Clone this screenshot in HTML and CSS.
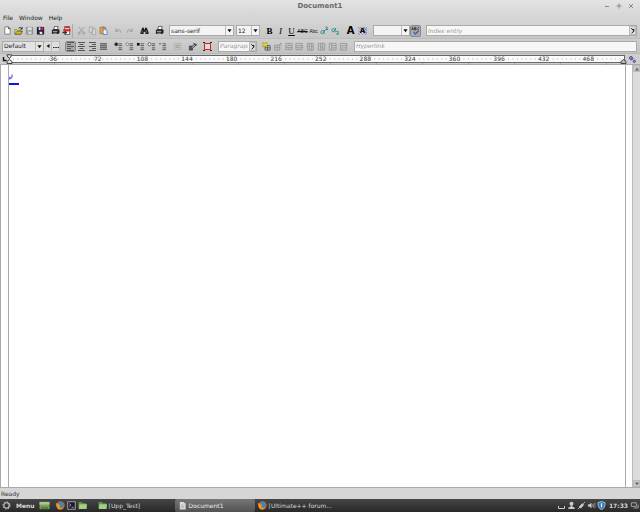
FILE: index.html
```html
<!DOCTYPE html>
<html lang="en">
<head>
<meta charset="utf-8">
<title>Document1</title>
<link rel="stylesheet" href="styles.css">
</head>
<body>
<svg class="defs" aria-hidden="true">
  <symbol id="arrow" viewBox="0 0 6 6"><path d="M0.5 1.5h5L3 5z" fill="#111"/></symbol>
  <symbol id="print" viewBox="0 0 10 10"><path d="M3 4l1-3.5h4L7 4z" fill="#fff" stroke="#222" stroke-width=".7"/><path d="M1 4.5L2.5 3.5h6l1 1v3L8 9H1z" fill="#222"/><path d="M2 6h5M2.5 8h4" stroke="#ddd" stroke-width=".8"/></symbol>
  <symbol id="folder" viewBox="0 0 10 10"><path d="M.5 1h4l1 1.5h3.5v6H.5z" fill="#5e9440"/><path d="M1.5 3.5H10l-.5 5.5H1z" fill="#a5cf88"/></symbol>
  <symbol id="firefox" viewBox="0 0 10 10"><circle cx="5" cy="5" r="4.6" fill="#d9641c"/><path d="M3 1.2C5.500 0 9 2 8.500 5.500 8 8 5.500 8 4.500 7 5.500 6 2.500 5.500 2.500 4z" fill="#3c84c0"/><path d="M.5 2l2 1.500 2 1-1 2c1 1.500 3.500 1.500 4.500.5C7 9 4 10 2 8.500.3 7 0 4 .5 2z" fill="#f09a24"/></symbol>
  <symbol id="index" viewBox="0 0 6 8"><path d="M1.500 1.500l3 2.500M4.500 2v3L2 7" stroke="#111" stroke-width="1.200" fill="none"/></symbol>
</svg>
<div class="window">
  <header class="titlebar">
    <h1>Document1</h1>
    <div class="winbtns">
      <button aria-label="Minimize"><svg viewBox="0 0 6 6"><path d="M1 3.500h4"/></svg></button>
      <button aria-label="Maximize"><svg viewBox="0 0 6 6"><path d="M.5 3h5M3 .5v5"/></svg></button>
      <button aria-label="Close"><svg viewBox="0 0 6 6"><path d="M1 1l4 4M5 1L1 5"/></svg></button>
    </div>
  </header>
  <nav class="menubar"><button>File</button><button>Window</button><button>Help</button></nav>

  <div class="toolbar">
    <div class="group first">
      <button class="tool" aria-label="New"><svg viewBox="0 0 10 10"><path d="M2 1h4l2 2v6H2z" fill="#fff" stroke="#555" stroke-width=".7"/><path d="M6 1v2h2" fill="none" stroke="#222" stroke-width=".8"/></svg></button>
      <button class="tool" aria-label="Open"><svg viewBox="0 0 10 10"><path d="M1 9V4h2l1 1h4v4z" fill="#f0ea40" stroke="#333" stroke-width=".5"/><path d="M1 9l2-3h6.500L7.500 9z" fill="#d8c010" stroke="#222" stroke-width=".5"/><path d="M5 2.500c1.500-1.500 3-.5 3.500.5M9 1v2.500H7" stroke="#111" stroke-width=".9" fill="none"/></svg></button>
      <button class="tool" aria-label="Save"><svg viewBox="0 0 10 10"><path d="M1.500 1.500h7v7.500h-7z" fill="#aaa" stroke="#888"/><path d="M3 1.500h4.500v3H3zM4 6.500h3V9H4z" fill="#ddd"/></svg></button>
      <button class="tool" aria-label="Save as"><svg viewBox="0 0 10 10"><path d="M1.500 1.500h7v7.500h-7z" fill="#202050" stroke="#111"/><path d="M3 1.500h2v3H3zM4 6.500h3V9H4z" fill="#e4e4f4"/><path d="M5 3h3.500M7 1.500v3" stroke="#e02020" stroke-width="1.400"/></svg></button>
    </div>
    <div class="group">
      <button class="tool" aria-label="Print"><svg><use href="#print"/></svg></button>
      <button class="tool right" aria-label="Export PDF"><svg viewBox="0 0 10 10"><path d="M3 .5h5.500v9H3z" fill="#fff" stroke="#333" stroke-width=".8"/><path d="M1.500 3.500h8v2.500h-8z" fill="#e82020"/><path d="M3.500 1h4.500v1.500H3.500z" fill="#e82020"/><path d="M.5 6.500h3V5L6 7.300 3.500 9.500V8h-3z" fill="#333"/></svg></button>
    </div>
    <span class="sep"></span>
    <div class="group clip">
      <button class="tool off" aria-label="Cut"><svg viewBox="0 0 10 10"><path d="M2 1l5 6M8 1L3 7" stroke="#999" fill="none"/><circle cx="2.500" cy="8" r="1.200" fill="none" stroke="#999"/><circle cx="7.500" cy="8" r="1.200" fill="none" stroke="#999"/></svg></button>
      <button class="tool off" aria-label="Copy"><svg viewBox="0 0 10 10"><path d="M1.500 1h4v6h-4zM4.500 3h4v6.500h-4z" fill="#ddd" stroke="#999" stroke-width=".8"/></svg></button>
      <button class="tool" aria-label="Paste"><svg viewBox="0 0 10 10"><path d="M1 1.500h6.500v7H1z" fill="#e5a53c" stroke="#9a6a20" stroke-width=".7"/><path d="M3 .5h3v2H3z" fill="#888"/><path d="M4.500 3.500H7l2 2v4H4.500z" fill="#e8f0ff" stroke="#4868a0" stroke-width=".8"/></svg></button>
    </div>
    <div class="group">
      <button class="tool off" aria-label="Undo"><svg viewBox="0 0 10 10"><path d="M2 3v3h3M2.500 5.500C4 3 7.500 3.500 7.500 7.500" stroke="#999" fill="none"/></svg></button>
      <button class="tool off" aria-label="Redo"><svg viewBox="0 0 10 10"><path d="M8 3v3H5M7.500 5.500C6 3 2.500 3.500 2.500 7.500" stroke="#999" fill="none"/></svg></button>
    </div>
    <div class="group">
      <button class="tool" aria-label="Find"><svg viewBox="0 0 10 10"><path d="M2.500 2h2v2h1V2h2l2 5v2H6V6.500H4V9H.5V7z" fill="#1c1c1c"/><path d="M2.500 5L1.800 7.500M7 5l.7 2.500" stroke="#bbb" stroke-width=".6"/></svg></button>
    </div>
    <div class="group">
      <button class="tool" aria-label="Print document"><svg><use href="#print"/></svg></button>
    </div>
    <span class="combo font"><select aria-label="Font"><option>sans-serif</option></select><svg><use href="#arrow"/></svg></span>
    <span class="combo size"><select aria-label="Font size"><option>12</option></select><svg><use href="#arrow"/></svg></span>
    <div class="group format">
      <button class="tool glyph"><b>B</b></button>
      <button class="tool glyph"><i>I</i></button>
      <button class="tool glyph"><u>U</u></button>
      <button class="tool mini"><s>ABC</s></button>
      <button class="tool mini">Abc</button>
      <button class="tool script" aria-label="Superscript"><svg viewBox="0 0 10 10"><path d="M3.500 5c-2.500-1-3.500 3.500-1 3.500C4 8.500 4.500 6 5 4.500 4 7 4 8.500 5 8.500M6 1.500c1.500-1 3 0 2 1.200L6.200 4H9" stroke="#178088" stroke-width="1" fill="none"/></svg></button>
      <button class="tool script" aria-label="Subscript"><svg viewBox="0 0 10 10"><path d="M3.500 3c-2.500-1-3.500 3.500-1 3.500C4 6.500 4.500 4 5 2.500 4 5 4 6.500 5 6.500M6 6.200c1.500-1 3 0 2 1L6.200 9H9" stroke="#178088" stroke-width="1" fill="none"/></svg></button>
    </div>
    <div class="group colors">
      <button class="tool big"><b>A</b></button>
      <button class="tool big shade">A</button>
    </div>
    <span class="combo lang"><select aria-label="Language"><option></option></select><svg><use href="#arrow"/></svg></span>
    <button class="tool pressed spell" aria-label="Spell check"><svg viewBox="0 0 10 10"><path d="M.8 4.500l1-3 1 3M1 3.500h1.500M4 1.500v3h1.200c1 0 1-1.500 0-1.500H4h1c1 0 1-1.500 0-1.500zM9 2C7 .8 6.500 4.800 9 4" stroke="#222" stroke-width=".7" fill="none"/><path d="M3 6.500L5 9l3.500-4" stroke="#2860b8" stroke-width="1.300" fill="none"/></svg></button>
    <label class="entry indexentry"><input aria-label="Index entry" placeholder="Index entry"><button aria-label="Choose index entry"><svg><use href="#index"/></svg></button></label>
  </div>

  <div class="toolbar second">
    <span class="combo style"><select aria-label="Style"><option>Default</option></select><svg><use href="#arrow"/></svg></span>
    <button class="flat" aria-label="Apply style"><svg viewBox="0 0 6 6"><path d="M4.500 1v4L1.500 3z" fill="#111"/></svg></button>
    <button class="flat" aria-label="Edit styles"><svg viewBox="0 0 6 6"><path d="M0 4.500h1.500M2.300 4.500h1.500M4.500 4.500H6" stroke="#222"/></svg></button>
    <div class="group align">
      <button class="tool pressed" aria-label="Align left"><svg viewBox="0 0 9 9"><path d="M1 .5h7M1 2.500h4M1 4.500h7M1 6.500h4M1 8.500h7"/></svg></button>
      <button class="tool" aria-label="Align center"><svg viewBox="0 0 9 9"><path d="M1 .5h7M2.500 2.500h4M1 4.500h7M2.500 6.500h4M1 8.500h7"/></svg></button>
      <button class="tool" aria-label="Align right"><svg viewBox="0 0 9 9"><path d="M1 .5h7M4 2.500h4M1 4.500h7M4 6.500h4M1 8.500h7"/></svg></button>
      <button class="tool" aria-label="Justify"><svg viewBox="0 0 9 9"><path d="M1 1.500h7M1 3.500h7M1 5.500h7M1 7.500h7"/><path d="M1 1h7v7H1z" fill="#777" stroke="none" opacity=".6"/></svg></button>
    </div>
    <div class="group lists">
      <button class="tool" aria-label="Round bullets"><svg viewBox="0 0 10 10"><path d="M5 2h4M5 4h4M5 6.500h4M5 8.500h4"/><circle cx="2.500" cy="2.500" r="1.700" fill="#111"/></svg></button>
      <button class="tool" aria-label="Circle bullets"><svg viewBox="0 0 10 10"><path d="M5 2h4M5 4h4M5 6.500h4M5 8.500h4"/><circle cx="2.500" cy="2.500" r="1.500" fill="#eee" stroke="#666" stroke-width=".8"/></svg></button>
      <button class="tool" aria-label="Square bullets"><svg viewBox="0 0 10 10"><path d="M5 2h4M5 4h4M5 6.500h4M5 8.500h4"/><path d="M1 1h3v3H1z" fill="#111" stroke="none"/></svg></button>
      <button class="tool" aria-label="Ring bullets"><svg viewBox="0 0 10 10"><path d="M5.500 2H9M5.500 4H9M5.500 6.500H9M5.500 8.500H9"/><circle cx="2.800" cy="2.500" r="1.700" fill="#fff" stroke="#333" stroke-width=".8"/></svg></button>
      <button class="tool" aria-label="Text bullets"><svg viewBox="0 0 10 10"><path d="M1 2h2.500M5 2h4M5 4h4M5 6.500h4M5 8.500h4"/></svg></button>
    </div>
    <div class="group single">
      <button class="tool off" aria-label="Background"><svg viewBox="0 0 10 10"><path d="M1.500 1.500h7v7h-7z" fill="#c8c4b4" stroke="#aaa" stroke-width=".7"/><path d="M3 4h4M3 6h4" stroke="#999"/></svg></button>
    </div>
    <div class="group single">
      <button class="tool" aria-label="Paragraph format"><svg viewBox="0 0 10 10"><path d="M1.500 4.500H5V9H1.500z" fill="#555" stroke="#333" stroke-width=".7"/><path d="M3.500 6L7 2.500h2.500L6 6.500" fill="#aaa" stroke="#333" stroke-width=".9"/><path d="M6 1l3 3" stroke="#222"/></svg></button>
    </div>
    <div class="group single">
      <button class="tool" aria-label="Header and footer"><svg viewBox="0 0 9 9"><path d="M0 .5h2M7 .5h2M0 8.500h2M7 8.500h2" stroke="#222"/><path d="M1.500 1.500h6v6h-6z" fill="#ddd" stroke="#e01818"/></svg></button>
    </div>
    <label class="entry para"><input aria-label="Paragraph label" placeholder="Paragraph label"><button aria-label="Choose label"><svg><use href="#index"/></svg></button></label>
    <div class="group tables">
      <button class="tool" aria-label="Insert table"><svg viewBox="0 0 10 10"><path d="M3.500 4h5.500v5H3.500zM3.500 6.500H9M6.200 4v5" fill="#ddd" stroke="#333" stroke-width=".8"/><path d="M.5.5L3 1.300 6 .5 5.500 3 6 5.500 3 4.800.5 5.500 1.200 3z" fill="#dcd820" stroke="#777710" stroke-width=".4"/></svg></button>
      <button class="tool off" aria-label="Table properties"><svg viewBox="0 0 10 10"><path d="M1.500 3.500h6V9h-6zM1.500 6h6M4.500 4v5M6 4l3-3v3"/></svg></button>
      <button class="tool off" aria-label="Insert row"><svg viewBox="0 0 10 10"><path d="M2 1.500h7v7H2zM2 4h7M2 6.200h7M5.500 6v2.500M5.500 1.500V4"/></svg></button>
      <button class="tool off" aria-label="Remove row"><svg viewBox="0 0 10 10"><path d="M1 1.500h7v7H1zM1 4h7M1 6.200h7M4.500 6v2.500M7 3l2 3"/></svg></button>
      <button class="tool off" aria-label="Insert column"><svg viewBox="0 0 10 10"><path d="M1.500 1.500h6.500v7.500H1.500zM3.700 1.500V9M6 1.500V9M1.500 5H3.500M6 5h2"/></svg></button>
      <button class="tool off" aria-label="Remove column"><svg viewBox="0 0 10 10"><path d="M1.500 1.500h7v7.500h-7zM4 1.500V9M6.300 1.500V9M3 4l4 3"/></svg></button>
      <button class="tool off" aria-label="Split cell"><svg viewBox="0 0 10 10"><path d="M1.500 1.500H9V9H1.500zM4 1.500V9M4 4h5M4 6.500h5"/></svg></button>
      <button class="tool off" aria-label="Cell properties"><svg viewBox="0 0 10 10"><path d="M1.500 1.500h7v7.500h-7zM3.500 3.500v5.500M3.500 4h5M5 6.500h3M7 1l2 2"/></svg></button>
    </div>
    <label class="entry link"><input aria-label="Hyperlink" placeholder="Hyperlink"></label>
  </div>

  <div class="rulerrow">
    <svg class="tab" viewBox="0 0 9 10"><path d="M3.500 3v3.500H6.500" fill="none" stroke="#111" stroke-width="1.400"/></svg>
    <div class="ruler">
      <svg class="dots"><line x1="4" y1="4" x2="100%" y2="4" stroke="#aaa" stroke-width="1" stroke-dasharray="1 3.460"/><line x1="45" y1="9" x2="100%" y2="9" stroke="#888" stroke-width="1" stroke-dasharray="1 45"/></svg>
      <span>36</span><span>72</span><span>108</span><span>144</span><span>180</span><span>216</span><span>252</span><span>288</span><span>324</span><span>360</span><span>396</span><span>432</span><span>468</span>
      <svg class="indent" viewBox="0 0 7 10"><path d="M1 .8h4.500v1L3.500 4.500 1 2zM3.500 5.500L1 7.500v2h5v-2z" fill="#ddd" stroke="#333" stroke-width=".9"/></svg>
      <svg class="rightindent" viewBox="0 0 7 10"><path d="M3.500 5.500L1 7.500v2h5v-2z" fill="#bbb" stroke="#333" stroke-width=".9"/></svg>
    </div>
    <button class="settings" aria-label="Settings"><svg viewBox="0 0 10 10"><circle cx="3.300" cy="3.300" r="1.600" fill="#9d9dd8" stroke="#3b3b98" stroke-width="1"/><circle cx="7" cy="7" r="1.300" fill="#9d9dd8" stroke="#3b3b98"/><path d="M6 3.500L3.500 6" stroke="#3b3b98"/></svg></button>
  </div>

  <main class="editor">
    <div class="page"><svg class="para-mark" viewBox="0 0 4 6"><path d="M3 .5v3L.8 4.500M.8 2.800v2.700" stroke="#2424ff" stroke-width=".9" fill="none"/></svg><div class="cursor"></div></div>
    <div class="scroll">
      <button aria-label="Scroll up"><svg viewBox="0 0 6 6"><path d="M1 4.500h4L3 1.500z" fill="#666"/></svg></button>
      <button aria-label="Scroll down"><svg viewBox="0 0 6 6"><path d="M1 1.500h4L3 4.500z" fill="#666"/></svg></button>
    </div>
  </main>
  <footer class="status">Ready</footer>
</div>

<div class="taskbar">
  <button class="start"><svg viewBox="0 0 10 10"><circle cx="5" cy="5" r="3" fill="none" stroke="#c8c8c8" stroke-width="1.200"/><circle cx="5" cy="5" r="4" fill="none" stroke="#c8c8c8" stroke-width="1" stroke-dasharray="1.500 1.640"/></svg>Menu</button>
  <div class="launch">
    <button class="desk" aria-label="Show desktop"><svg viewBox="0 0 12 10"><path d="M.5 1h11v8H.5z" fill="#77a35c"/><path d="M.5 1h11v3H.5z" fill="#a9c896"/><path d="M2 6.500h8V9H2z" fill="#55803c"/></svg></button>
    <button aria-label="Firefox"><svg><use href="#firefox"/></svg></button>
    <button aria-label="Terminal"><svg viewBox="0 0 10 10"><path d="M.8.8h8.400v8.400H.8z" fill="#20182a" stroke="#ccc" stroke-width=".8"/><path d="M2.500 3l2 1.500-2 1.500M5 7h2.500" stroke="#ddd" stroke-width=".7" fill="none"/></svg></button>
    <button aria-label="Files"><svg><use href="#folder"/></svg></button>
  </div>
  <button class="task"><svg><use href="#folder"/></svg>[Upp_Test]</button>
  <button class="task active"><svg viewBox="0 0 10 10"><path d="M2 1h4l2.500 2v6.500H2z" fill="#ddd"/><path d="M3 4.500h4M3 6h4M3 7.500h4" stroke="#999" stroke-width=".6"/></svg>Document1</button>
  <button class="task"><svg><use href="#firefox"/></svg>[Ultimate++ forum...</button>
  <div class="tray">
    <svg viewBox="0 0 9 9"><path d="M1.500 5v2.500h6V5" fill="none" stroke="#ccc"/></svg>
    <svg viewBox="0 0 10 10"><circle cx="5" cy="3" r="2.200" fill="#ccc"/><path d="M4 5h2v1.500l2.500.8V9h-7V7.300L4 6.500z" fill="#ccc"/></svg>
    <svg viewBox="0 0 10 10"><path d="M1 9l2-2M7 3l2-2M2.500 6.500L6 3l1.300 1.300L4 8z" stroke="#ccc" fill="#ccc"/></svg>
    <svg viewBox="0 0 10 10"><path d="M1 4h1.500L5 2v6L2.500 6H1z" fill="#ccc"/><path d="M6.200 3.500v3M7.500 2.500v5M8.800 2v6" stroke="#aaa" stroke-width=".7"/></svg>
    <svg viewBox="0 0 10 10"><path d="M5 .4l4 1.500c0 4-1 6.500-4 7.800C2 8.400 1 5.900 1 1.900z" fill="#3478b8" stroke="#c8dcec" stroke-width=".8"/><path d="M5 2.500v4.500" stroke="#fff" stroke-width="1.300"/></svg>
    <time>17:33</time>
    <svg viewBox="0 0 10 10"><path d="M1.500 2h5.500v4H1.500zM4 7.800h5V4" fill="none" stroke="#bbb" stroke-width=".9"/></svg>
  </div>
</div>
</body>
</html>
```
FILE: styles.css
```css
* { box-sizing: border-box; }
html, body { height: 100%; }
body {
  margin: 0;
  display: flex;
  flex-direction: column;
  font: 6px/8px "DejaVu Sans", sans-serif;
  color: #222;
  background: #d5d5d5;
  overflow: hidden;
}
button, input, select { font: inherit; color: inherit; }
button { border: 0; padding: 0; margin: 0; background: none; }
svg { display: block; flex: none; }
.defs { position: absolute; width: 0; height: 0; }
.window { flex: 1; min-height: 0; display: flex; flex-direction: column; }

.titlebar {
  display: flex;
  align-items: center;
  height: 12px;
  padding-right: 6px;
  background: linear-gradient(#e4e4e4, #d9d9d9);
}
.titlebar h1 {
  flex: 1;
  margin: 0;
  padding-left: 36px;
  text-align: center;
  font-size: 7px;
  color: #6a6a6a;
}
.winbtns { display: flex; gap: 6px; }
.winbtns svg { width: 6px; height: 6px; stroke: #888; fill: none; }
.menubar { display: flex; gap: 6px; height: 11px; padding: 0 3px; background: linear-gradient(#d9d9d9, #d3d3d3); }
.menubar button { line-height: 8px; }

.toolbar {
  display: flex;
  align-items: center;
  height: 15px;
  padding: 0 3px 0 2px;
  background: linear-gradient(#d3d3d3, #c6c6c6);
}
.second { background: linear-gradient(#cfcfcf, #c3c3c3); border-top: 1px solid #bdbdbd; }
.group { display: flex; margin-left: 4px; }
.first { margin-left: 0; }
.tool {
  display: flex;
  align-items: center;
  justify-content: center;
  width: 11px;
  height: 11px;
  flex: none;
}
.tool svg { width: 9px; height: 9px; }
.sep { width: 1px; height: 14px; background: #aaa; }
.clip { margin-left: 3px; }
.format { margin-left: 4px; }
.glyph { font: 9px/10px "Liberation Serif", serif; color: #000; }
.mini { font: 5px/8px "Liberation Sans", sans-serif; color: #111; }
.colors { margin-left: 4px; gap: 2px; }
.big { font-size: 10px; color: #000; }
.colors .shade { background: repeating-linear-gradient(45deg, #c8c8dc 0 1px, #9494b4 1px 2px); width: 9px; height: 8px; font-size: 7px; font-weight: bold; align-self: center; }
.pressed { background: #aaa; border: 1px solid #8a8a8a; border-radius: 2px; }

.combo {
  position: relative;
  display: flex;
  flex: none;
  height: 11px;
  border: 1px solid #aaa;
  background: #f4f4f4;
}
.combo select {
  appearance: none;
  width: 100%;
  border: 0;
  border-radius: 0;
  padding: 0 8px 0 1px;
  background: linear-gradient(#bbb, #bbb) right 7px top / 1px 100% no-repeat;
}
.combo svg { position: absolute; right: 1px; top: 2px; width: 5px; height: 5px; pointer-events: none; }
.font { width: 65px; margin-left: 4px; }
.size { width: 24px; margin-left: 2px; }
.lang { width: 37px; margin-left: 6px; }
.style { width: 42px; background: #e4e4e4; }
.spell { height: 12px; }
.flat { display: flex; align-items: center; justify-content: center; width: 8px; height: 11px; background: #dedede; border: solid #bbb; border-width: 1px 1px 1px 0; }
.flat svg { width: 6px; height: 6px; }

.entry {
  display: flex;
  min-width: 0;
  height: 11px;
  border: 1px solid #aaa;
  background: #f7f7f7;
}
.entry input { flex: 1; min-width: 0; width: 0; border: 0; padding: 0 1px; background: none; outline: 0; }
.entry input::placeholder { font-style: italic; color: #999; opacity: 1; }
.entry button { display: flex; align-items: center; width: 7px; border: 1px solid #bbb; background: #ddd; }
.entry button svg { width: 5px; height: 7px; }
.indexentry, .link { flex: 1; margin-left: 5px; }
.para { width: 39px; margin-left: 5px; }
.align { margin-left: 5px; }
.align svg, .lists svg { stroke: #555; stroke-width: 1; fill: none; }
.lists { margin-left: 4px; }
.single { margin-left: 4px; }
.tables { margin-left: 4px; }
.tables .off svg { stroke: #999; stroke-width: 1; fill: none; }

.rulerrow { display: flex; align-items: center; height: 11px; background: #cecece; border-top: 1px solid #b8b8b8; }
.tab { width: 9px; height: 10px; }
.ruler {
  position: relative;
  flex: 1;
  display: flex;
  height: 8px;
  padding-left: 22px;
  border: solid #666;
  border-width: 1px 1px 1px 0;
  background: #fbfbfb;
}
.ruler span { position: relative; width: 7.52%; flex: none; line-height: 6px; text-align: center; color: #444; font-size: 6px; }
.dots { position: absolute; left: 0; top: -1px; width: 100%; height: 10px; }
.indent, .rightindent { position: absolute; top: -2px; width: 7px; height: 10px; }
.indent { left: -3px; }
.rightindent { right: -3px; }
.settings { width: 15px; display: flex; justify-content: center; }
.settings svg { width: 9px; height: 9px; }

.editor { flex: 1; min-height: 0; display: flex; background: #fff; border: solid #aaa; border-width: 1px 0 1px 1px; }
.page { flex: 1; margin: 0 6px 0 7px; border: solid #aaa; border-width: 0 1px; padding-top: 9px; }
.para-mark { width: 4px; height: 6px; }
.cursor { width: 10px; height: 2px; margin-top: 3px; background: #1414e0; }
.scroll { width: 8px; display: flex; flex-direction: column; justify-content: space-between; background: #dcdcdc; border-left: 1px solid #bbb; }
.scroll button { height: 7px; display: flex; justify-content: center; background: #c8c8c8; border: 1px solid #bbb; }
.scroll svg { width: 6px; height: 6px; }
.status { height: 11px; padding: 1px; line-height: 9px; background: #d6d6d6; color: #333; }

.taskbar {
  display: flex;
  align-items: center;
  height: 13px;
  padding: 0 1px 0 2px;
  color: #d8d8d8;
  background: linear-gradient(#464646, #282828);
}
.taskbar svg { width: 9px; height: 9px; }
.start { display: flex; align-items: center; gap: 5px; font-weight: bold; }
.launch { display: flex; gap: 2px; margin-left: 4px; }
.launch .desk { margin-right: 4px; }
.launch .desk svg { width: 11px; }
.task { display: flex; align-items: center; gap: 1px; width: 80px; height: 13px; padding-left: 3px; text-align: left; white-space: nowrap; }
.launch + .task { margin-left: 8px; }
.task svg { margin-right: 1px; }
.active { background: linear-gradient(#777, #525252); border-radius: 2px; color: #eee; }
.tray { display: flex; align-items: center; gap: 1px; margin-left: auto; }
.tray time { margin: 0 1px 0 2px; font-weight: bold; }
```
